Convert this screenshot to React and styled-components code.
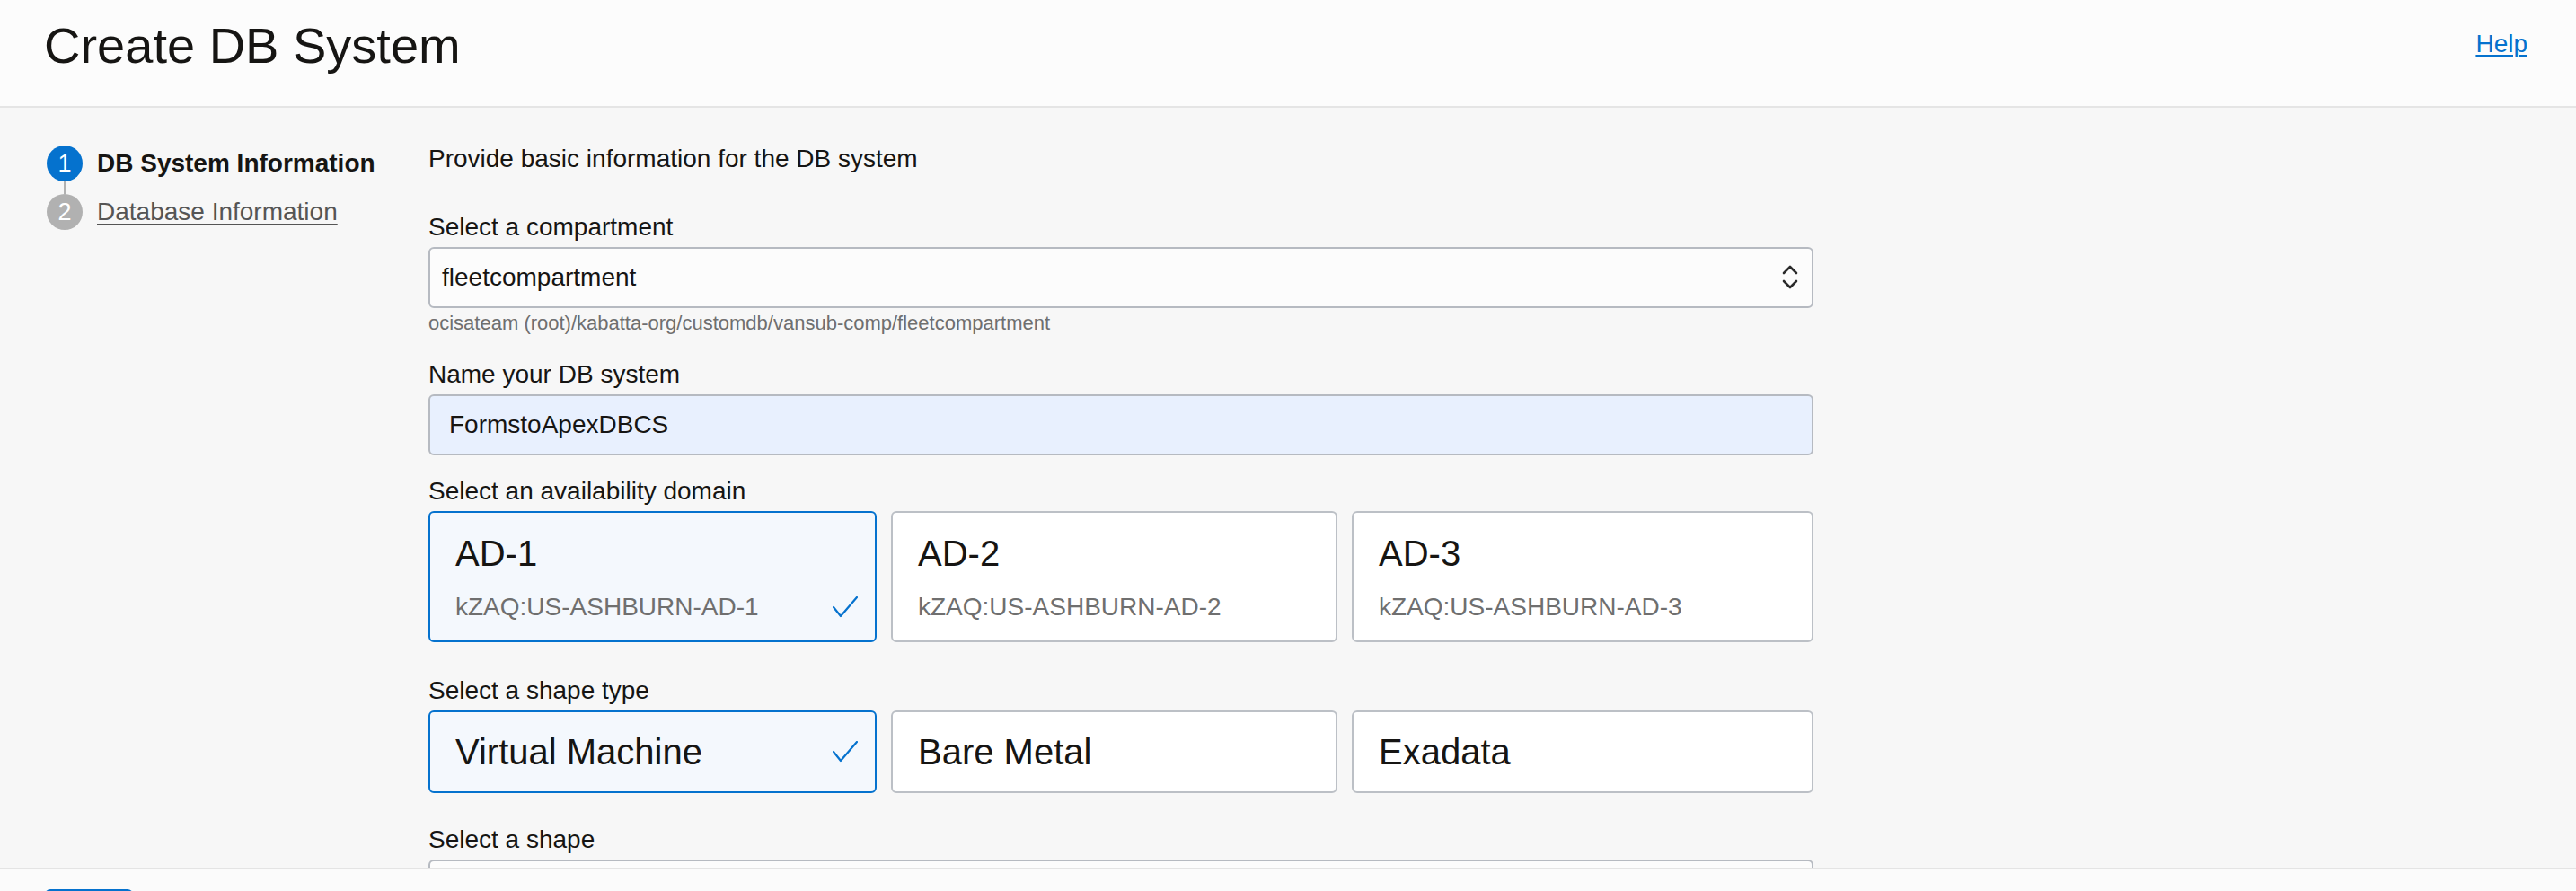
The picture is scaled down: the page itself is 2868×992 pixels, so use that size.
import React from "react";
import styled, { createGlobalStyle } from "styled-components";

const GlobalStyle = createGlobalStyle`
  html, body { margin: 0; padding: 0; background: #f7f7f7; overflow: hidden; }
  body { font-family: "Liberation Sans", Arial, Helvetica, sans-serif; color: #161513; }
  * { box-sizing: border-box; }
`;

const Page = styled.div`
  display: grid;
  grid-template-rows: 120px 846px auto;
  width: 2868px;
`;

const Header = styled.header`
  display: flex;
  justify-content: space-between;
  align-items: flex-start;
  background: #fcfcfc;
  border-bottom: 2px solid #e5e5e5;
  padding: 0 54px 0 49px;
`;

const Title = styled.h1`
  margin: 23px 0 0;
  font-size: 56px;
  line-height: 56px;
  font-weight: 400;
  color: #161513;
`;

const HelpLink = styled.a`
  margin-top: 35px;
  font-size: 28px;
  line-height: 28px;
  color: #0572ce;
  text-decoration: underline;
  text-underline-offset: 3px;
  text-decoration-thickness: 2px;
`;

const Main = styled.main`
  display: flex;
  overflow: hidden;
`;

const Sidebar = styled.nav`
  width: 477px;
  flex-shrink: 0;
  padding: 42px 0 0 52px;
  display: flex;
  flex-direction: column;
`;

const Step = styled.div`
  display: flex;
  align-items: center;
  gap: 16px;
  height: 40px;
`;

const StepCircle = styled.span`
  width: 40px;
  height: 40px;
  border-radius: 50%;
  display: flex;
  align-items: center;
  justify-content: center;
  background: ${(p) => (p.$active ? "#0572ce" : "#b1b1b1")};
  color: #fff;
  font-size: 27px;
  line-height: 1;
`;

const StepLabel = styled.span`
  font-size: 28px;
  line-height: 40px;
  font-weight: ${(p) => (p.$active ? 700 : 400)};
  color: ${(p) => (p.$active ? "#161513" : "#555555")};
  text-decoration: ${(p) => (p.$active ? "none" : "underline")};
  text-underline-offset: 4px;
  text-decoration-thickness: 2px;
`;

const Connector = styled.span`
  display: block;
  width: 3px;
  height: 14px;
  margin-left: 19px;
  background: #b1b1b1;
`;

const Form = styled.section`
  width: 1542px;
  flex-shrink: 0;
  padding-top: 43px;
  display: flex;
  flex-direction: column;
`;

const Intro = styled.p`
  margin: 0;
  font-size: 28px;
  line-height: 28px;
  color: #161513;
`;

const Field = styled.div`
  margin-top: ${(p) => p.$gap}px;
  display: flex;
  flex-direction: column;
`;

const Label = styled.label`
  display: block;
  font-size: 28px;
  line-height: 28px;
  margin-bottom: 8px;
  color: #161513;
`;

const SelectBox = styled.div`
  height: 68px;
  display: flex;
  align-items: center;
  justify-content: space-between;
  padding: 0 15px 0 13px;
  background: #fcfcfc;
  border: 2px solid #b6bac1;
  border-radius: 6px;
  font-size: 28px;
  color: #161513;
`;

const Hint = styled.div`
  margin-top: 4px;
  font-size: 22px;
  line-height: 26px;
  color: #6f6f6f;
`;

const TextInput = styled.input`
  height: 68px;
  padding: 0 21px;
  background: #e8f0fe;
  border: 2px solid #b6bac1;
  border-radius: 6px;
  font-family: "Liberation Sans", Arial, Helvetica, sans-serif;
  font-size: 28px;
  color: #161513;
  outline: none;
`;

const CardGrid = styled.div`
  display: grid;
  grid-template-columns: 499px 497px 1fr;
  gap: 16px;
`;

const Card = styled.div`
  display: flex;
  flex-direction: column;
  justify-content: center;
  height: ${(p) => p.$height}px;
  padding: 0 19px 0 28px;
  background: ${(p) => (p.$selected ? "#f4f8fd" : "#ffffff")};
  border: 2px solid ${(p) => (p.$selected ? "#0572ce" : "#bcc0c6")};
  border-radius: 6px;
`;

const CardTitle = styled.div`
  font-size: 40px;
  line-height: 48px;
  color: #161513;
`;

const CardRow = styled.div`
  display: flex;
  align-items: center;
  justify-content: space-between;
  margin-top: ${(p) => p.$gap || 0}px;
`;

const CardSub = styled.div`
  font-size: 28px;
  line-height: 32px;
  color: #6f6f6f;
`;

const Footer = styled.footer`
  background: #fbfbfb;
  border-top: 2px solid #e4e4e4;
  padding: 22px 0 30px 50px;
`;

const PrimaryButton = styled.button`
  width: 98px;
  height: 56px;
  border: none;
  border-radius: 6px;
  background: #0572ce;
`;

const Check = () => (
  <svg width="28" height="24" viewBox="0 0 28 24" fill="none">
    <polyline
      points="1,12 9,22 27,1"
      stroke="#0572ce"
      strokeWidth="2.2"
      strokeLinecap="round"
      strokeLinejoin="round"
    />
  </svg>
);

const UpDown = () => (
  <svg width="18" height="30" viewBox="0 0 18 30" fill="none">
    <polyline points="2,10 9,3 16,10" stroke="#2b2b2b" strokeWidth="2.6" strokeLinecap="round" strokeLinejoin="round" />
    <polyline points="2,19 9,26 16,19" stroke="#2b2b2b" strokeWidth="2.6" strokeLinecap="round" strokeLinejoin="round" />
  </svg>
);

const domains = [
  { name: "AD-1", id: "kZAQ:US-ASHBURN-AD-1", selected: true },
  { name: "AD-2", id: "kZAQ:US-ASHBURN-AD-2" },
  { name: "AD-3", id: "kZAQ:US-ASHBURN-AD-3" },
];

const shapes = [
  { name: "Virtual Machine", selected: true },
  { name: "Bare Metal" },
  { name: "Exadata" },
];

export default function App() {
  return (
    <>
      <GlobalStyle />
      <Page>
        <Header>
          <Title>Create DB System</Title>
          <HelpLink href="#">Help</HelpLink>
        </Header>
        <Main>
          <Sidebar>
            <Step>
              <StepCircle $active>1</StepCircle>
              <StepLabel $active>DB System Information</StepLabel>
            </Step>
            <Connector />
            <Step>
              <StepCircle>2</StepCircle>
              <StepLabel>Database Information</StepLabel>
            </Step>
          </Sidebar>
          <Form>
            <Intro>Provide basic information for the DB system</Intro>
            <Field $gap={48}>
              <Label>Select a compartment</Label>
              <SelectBox>
                <span>fleetcompartment</span>
                <UpDown />
              </SelectBox>
              <Hint>ocisateam (root)/kabatta-org/customdb/vansub-comp/fleetcompartment</Hint>
            </Field>
            <Field $gap={30}>
              <Label>Name your DB system</Label>
              <TextInput readOnly value="FormstoApexDBCS" />
            </Field>
            <Field $gap={26}>
              <Label>Select an availability domain</Label>
              <CardGrid>
                {domains.map((d) => (
                  <Card key={d.name} $selected={d.selected} $height={146}>
                    <CardTitle>{d.name}</CardTitle>
                    <CardRow $gap={20}>
                      <CardSub>{d.id}</CardSub>
                      {d.selected && <Check />}
                    </CardRow>
                  </Card>
                ))}
              </CardGrid>
            </Field>
            <Field $gap={40}>
              <Label>Select a shape type</Label>
              <CardGrid>
                {shapes.map((s) => (
                  <Card key={s.name} $selected={s.selected} $height={92}>
                    <CardRow>
                      <CardTitle>{s.name}</CardTitle>
                      {s.selected && <Check />}
                    </CardRow>
                  </Card>
                ))}
              </CardGrid>
            </Field>
            <Field $gap={38}>
              <Label>Select a shape</Label>
              <SelectBox />
            </Field>
          </Form>
        </Main>
        <Footer>
          <PrimaryButton aria-label="Next" />
        </Footer>
      </Page>
    </>
  );
}
